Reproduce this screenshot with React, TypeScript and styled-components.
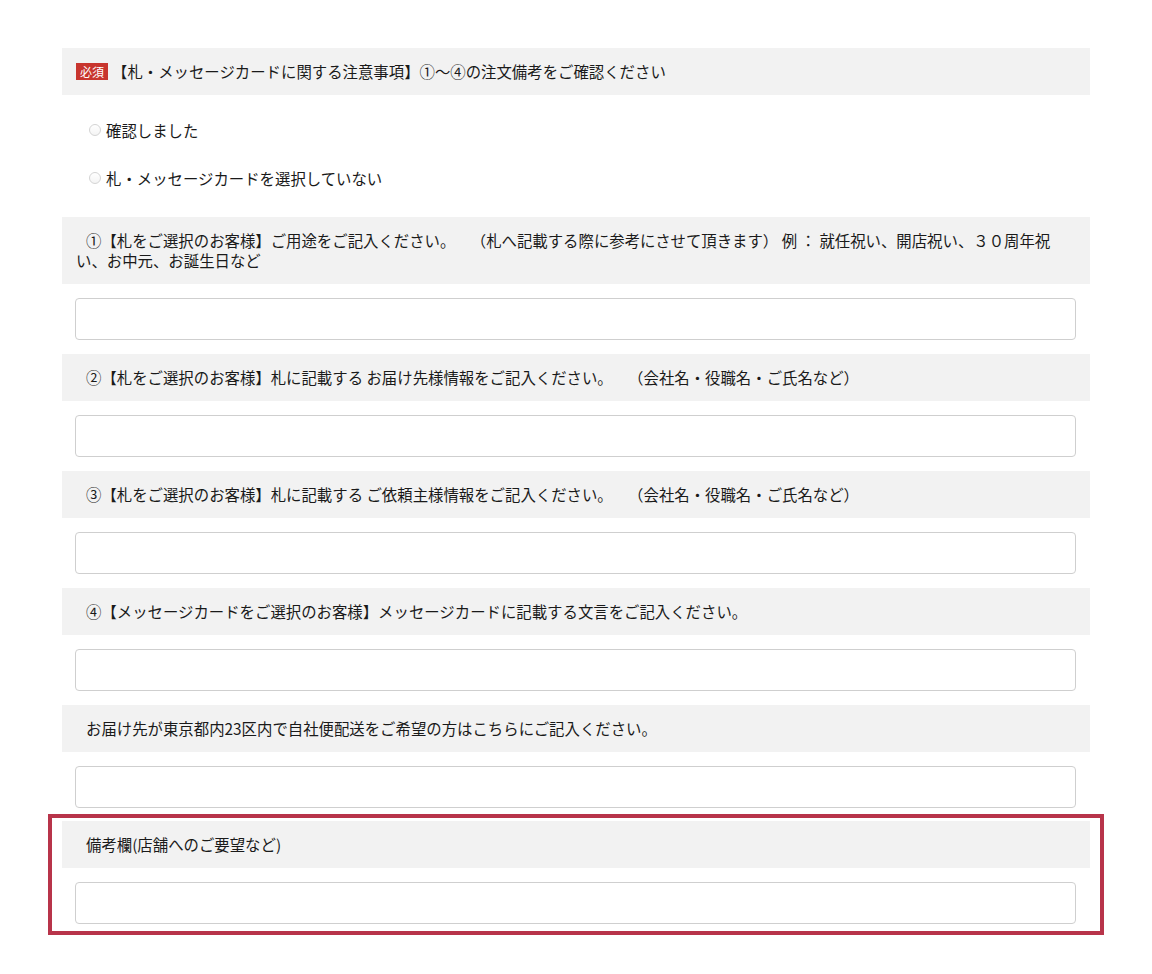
import React from "react";
import styled, { createGlobalStyle } from "styled-components";

const GlobalStyle = createGlobalStyle`
  body {
    margin: 0;
    background: #fff;
    font-family: "Noto Sans CJK JP", "Noto Sans", sans-serif;
    color: #1a1a1a;
  }
`;

const Page = styled.div`
  width: 1028px;
  padding: 48px 62px 40px;
`;

const Bar = styled.div`
  background: #f2f2f2;
  padding: 13px 14px 14px;
  font-size: 15.4px;
  line-height: 20px;
`;

const Label = styled.div`
  text-indent: 10px;
`;

const Badge = styled.span`
  display: inline-block;
  vertical-align: 1px;
  background: #c8352e;
  color: #fff;
  font-size: 12px;
  line-height: 17px;
  padding: 0 4px;
  margin-right: 4px;
`;

const RadioList = styled.div`
  padding: 11px 0 1px 27px;
`;

const RadioRow = styled.label`
  display: flex;
  align-items: center;
  height: 48px;
  font-size: 15.4px;
  cursor: pointer;
`;

const Radio = styled.input`
  appearance: none;
  width: 12px;
  height: 12px;
  margin: 0 5px 0 0;
  border: 1px solid #d4d4d4;
  border-radius: 50%;
  background: linear-gradient(#fff, #f4f4f4);
  &:checked {
    background: radial-gradient(#555 35%, #fff 40%);
  }
`;

const Field = styled.div<{ $highlight?: boolean }>`
  margin-top: ${(p) => (p.$highlight ? "6px" : "14px")};
  ${(p) =>
    p.$highlight &&
    `
    margin-left: -14px;
    margin-right: -14px;
    border: 4px solid #b8344a;
    padding: 3px 10px 7px;
  `}
`;

const TextInput = styled.input`
  display: block;
  box-sizing: border-box;
  width: 1001px;
  height: 42px;
  margin: 14px 0 0 13px;
  border: 1px solid #cfcfcf;
  border-radius: 4px;
  background: #fff;
  font: inherit;
  font-size: 15px;
  padding: 0 10px;
  outline: none;
`;

const fields = [
  "①【札をご選択のお客様】ご用途をご記入ください。　　（札へ記載する際に参考にさせて頂きます） 例 ： 就任祝い、開店祝い、３０周年祝い、お中元、お誕生日など",
  "②【札をご選択のお客様】札に記載する お届け先様情報をご記入ください。　　（会社名・役職名・ご氏名など）",
  "③【札をご選択のお客様】札に記載する ご依頼主様情報をご記入ください。　　（会社名・役職名・ご氏名など）",
  "④【メッセージカードをご選択のお客様】メッセージカードに記載する文言をご記入ください。",
  "お届け先が東京都内23区内で自社便配送をご希望の方はこちらにご記入ください。",
];

export default function App() {
  return (
    <Page>
      <GlobalStyle />
      <Bar>
        <Badge>必須</Badge>【札・メッセージカードに関する注意事項】①〜④の注文備考をご確認ください
      </Bar>
      <RadioList>
        <RadioRow>
          <Radio type="radio" name="confirm" />
          確認しました
        </RadioRow>
        <RadioRow>
          <Radio type="radio" name="confirm" />
          札・メッセージカードを選択していない
        </RadioRow>
      </RadioList>
      {fields.map((text, i) => (
        <Field key={i}>
          <Bar>
            <Label>{text}</Label>
          </Bar>
          <TextInput type="text" />
        </Field>
      ))}
      <Field $highlight>
        <Bar>
          <Label>備考欄(店舗へのご要望など)</Label>
        </Bar>
        <TextInput type="text" />
      </Field>
    </Page>
  );
}
